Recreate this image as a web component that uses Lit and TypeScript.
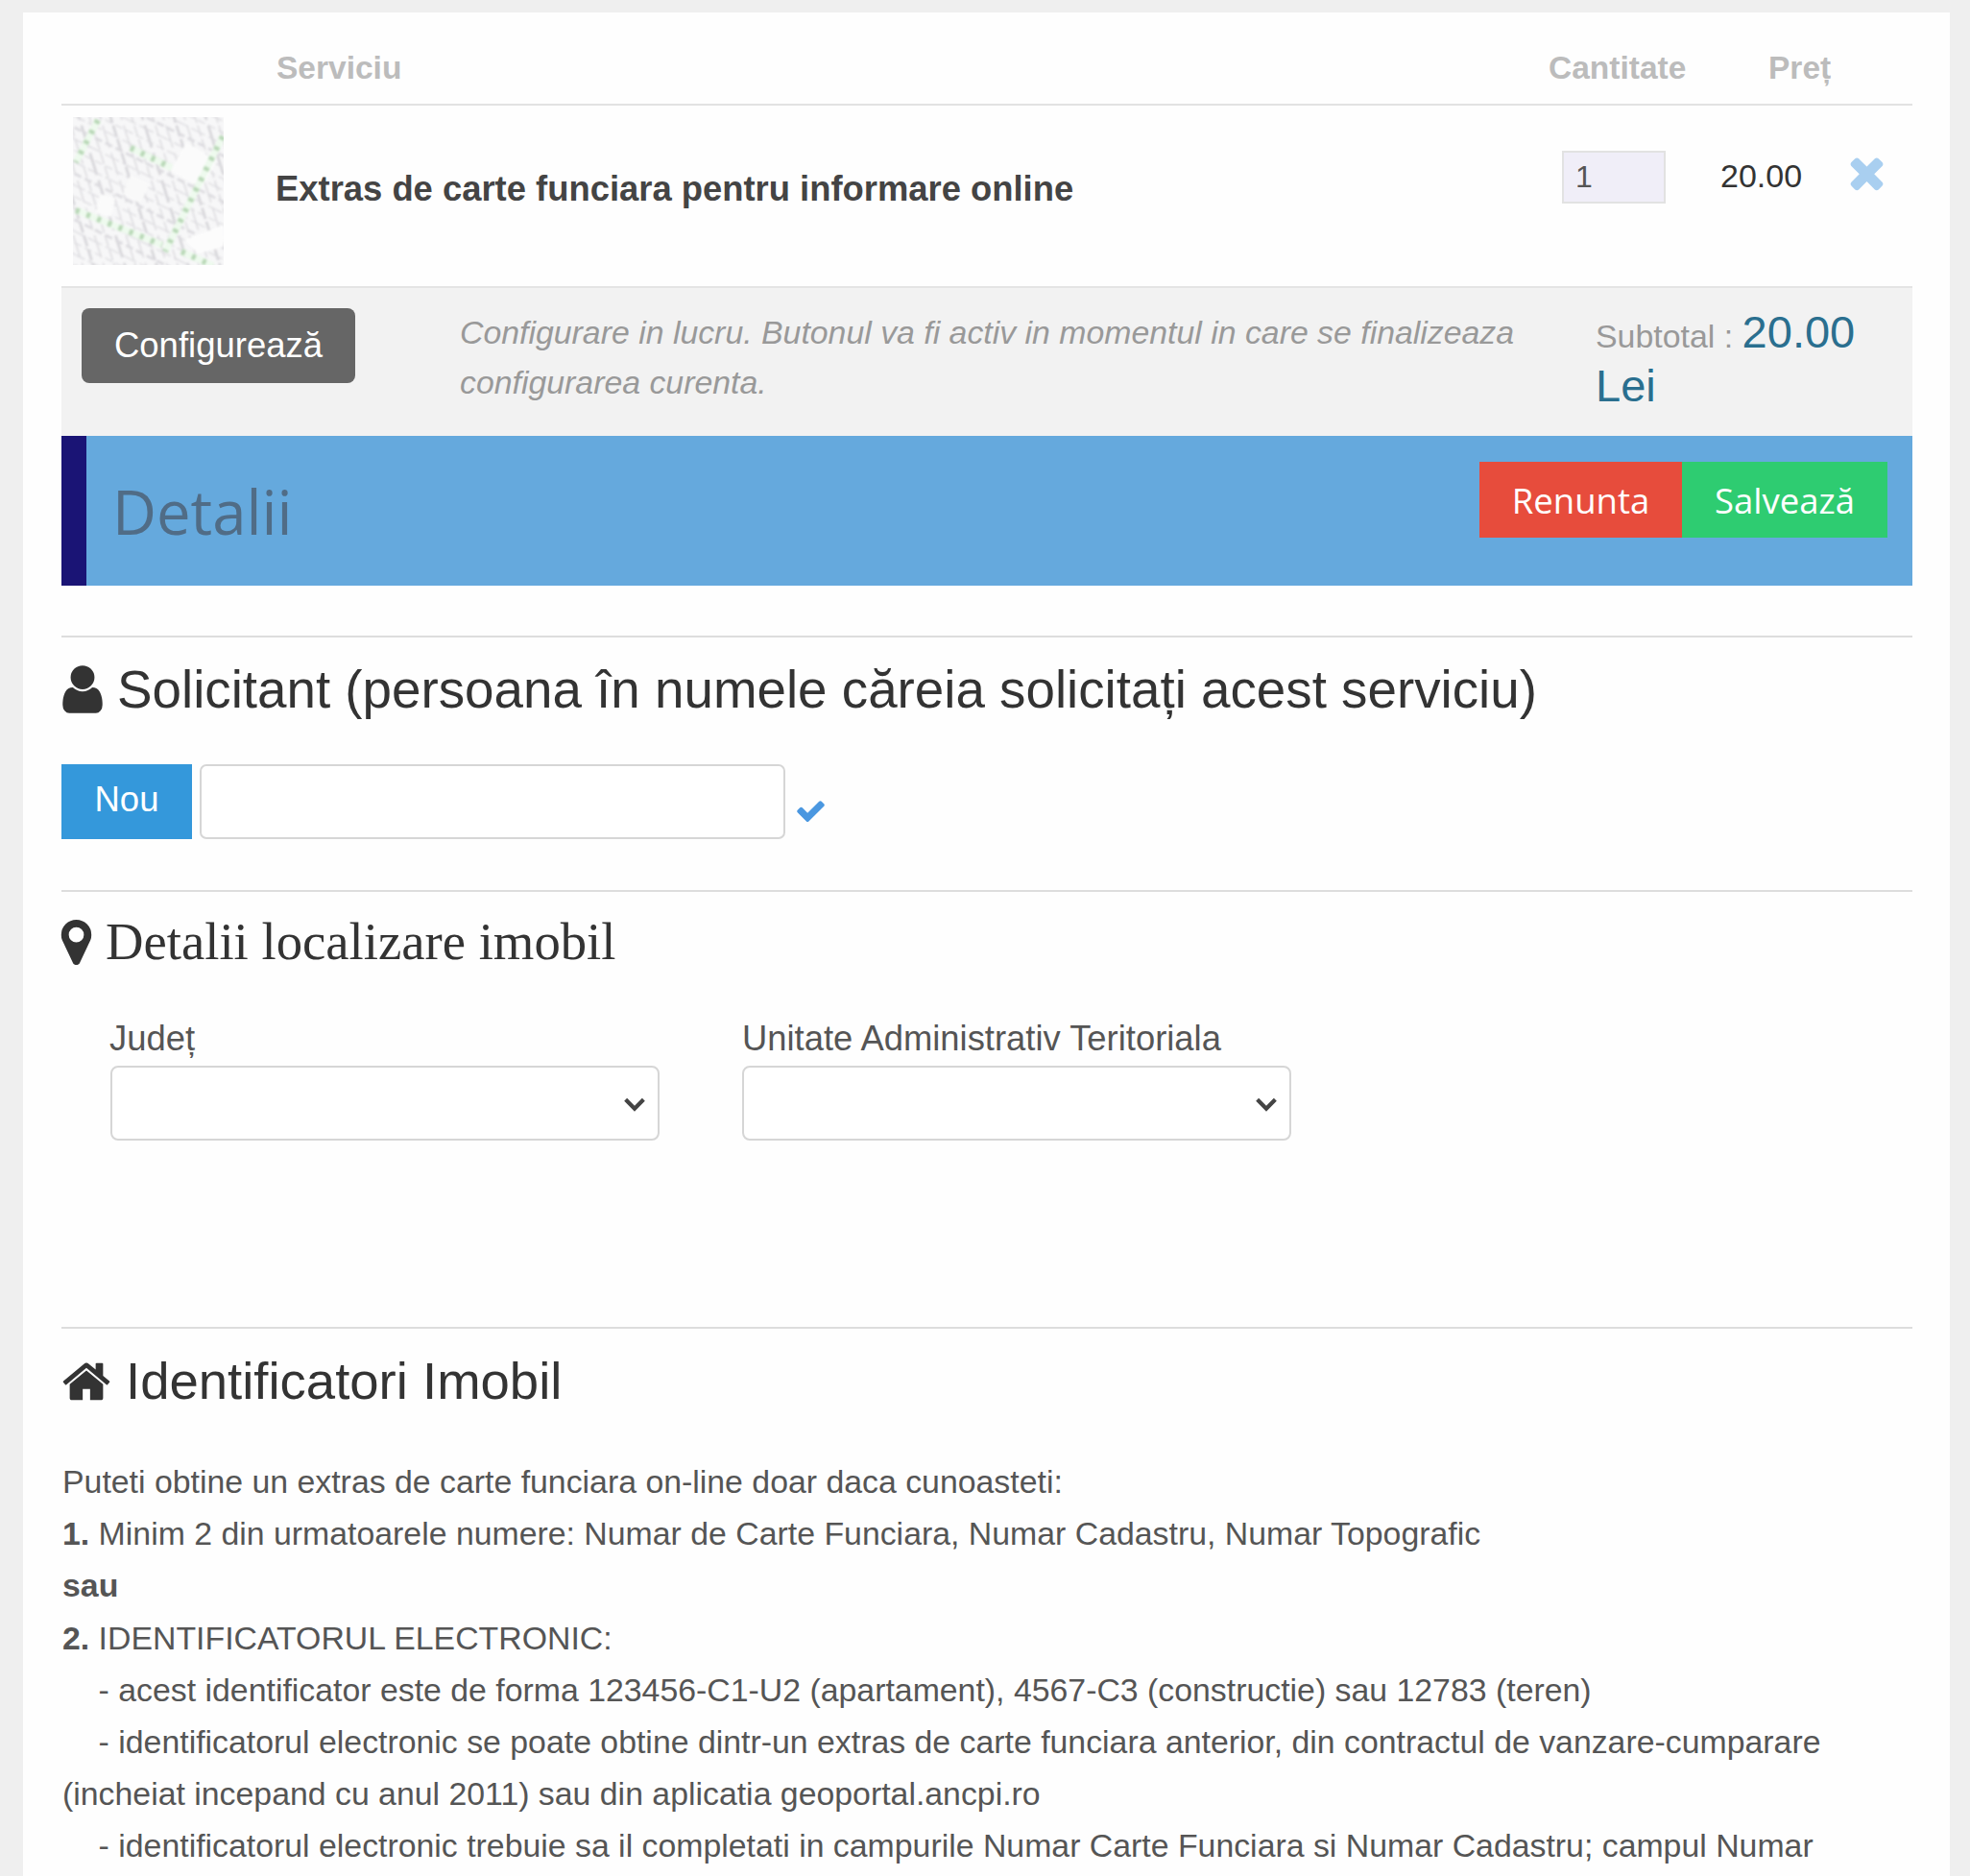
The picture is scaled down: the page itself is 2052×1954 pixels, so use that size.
import { LitElement, html, css, svg } from "lit";
import { customElement } from "lit/decorators.js";

const P = {
  user: "M1536 1399q0 109-62.5 187t-150.5 78h-854q-88 0-150.5-78t-62.5-187q0-85 8.5-160.5t31.5-151.5 58.5-130 94-88.5 134.5-34.5q131 128 313 128t313-128q76 0 134.5 34.5t94 88.5 58.5 130 31.5 151.5 8.5 160.5zm-256-887q0 159-112.5 271.5t-271.5 112.5-271.5-112.5-112.5-271.5 112.5-271.5 271.5-112.5 271.5 112.5 112.5 271.5z",
  pin: "M1152 640q0-106-75-181t-181-75-181 75-75 181 75 181 181 75 181-75 75-181zm256 0q0 109-33 179l-364 774q-16 33-47.5 52t-67.5 19-67.5-19-46.5-52l-365-774q-33-70-33-179 0-212 150-362t362-150 362 150 150 362z",
  home: "M1472 992v480q0 26-19 45t-45 19h-384v-384h-256v384h-384q-26 0-45-19t-19-45v-480q0-1 .5-3t.5-3l575-474 575 474q1 2 1 6zm223-69l-62 74q-8 9-21 11h-3q-13 0-21-7l-692-577-692 577q-12 8-24 7-13-2-21-11l-62-74q-8-10-7-23.5t11-21.5l719-599q32-26 76-26t76 26l244 204v-195q0-14 9-23t23-9h192q14 0 23 9t9 23v408l219 182q10 8 11 21.5t-7 23.5z",
  times: "M1490 1322q0 40-28 68l-136 136q-28 28-68 28t-68-28l-294-294-294 294q-28 28-68 28t-68-28l-136-136q-28-28-28-68t28-68l294-294-294-294q-28-28-28-68t28-68l136-136q28-28 68-28t68 28l294 294 294-294q28-28 68-28t68 28l136 136q28 28 28 68t-28 68l-294 294 294 294q28 28 28 68z",
  check: "M1671 566q0 40-28 68l-724 724-136 136q-28 28-68 28t-68-28l-136-136-362-362q-28-28-28-68t28-68l136-136q28-28 68-28t68 28l294 295 656-657q28-28 68-28t68 28l136 136q28 28 28 68z",
};

const icon = (d: string, cls: string, box = "0 0 1792 1792") =>
  html`<svg class=${cls} viewBox=${box} aria-hidden="true"><path d=${d} fill="currentColor"></path></svg>`;

function mapLines() {
  const grey: any[] = [];
  for (let i = -8; i < 24; i++) {
    const x = i * 11;
    grey.push(svg`<line x1=${x} y1="-20" x2=${x + 62} y2="180" stroke="#d6d5d9" stroke-width=${i % 3 ? 1.2 : 2.6} stroke-dasharray=${i % 2 ? "12 3" : "24 6"}></line>`);
  }
  for (let i = -8; i < 20; i++) {
    const y = i * 12;
    grey.push(svg`<line x1="-20" y1=${y} x2="180" y2=${y + 100} stroke="#dbdade" stroke-width=${i % 4 ? 1.2 : 2.6} stroke-dasharray=${i % 2 ? "16 4" : "8 4"}></line>`);
  }
  const roads = [
    [26, 3, 3, 47],
    [156, 20, 96, 140],
    [3, 97, 93, 133],
    [60, 32, 103, 53],
    [113, 140, 146, 155],
  ];
  const green = roads.map(
    ([a, b, c, d]) => svg`
      <line x1=${a} y1=${b} x2=${c} y2=${d} stroke="#eefaee" stroke-width="7"></line>
      <line x1=${a} y1=${b} x2=${c} y2=${d} stroke="#b9d8b7" stroke-width="6" stroke-dasharray="4 8"></line>`
  );
  return html`<svg class="map" viewBox="0 0 157 154" aria-hidden="true">
    <rect width="157" height="154" fill="#f7f7f8"></rect>
    <g class="map-blur">
      ${grey}
      <polygon points="118,26 150,46 134,74 102,56" fill="#fbfbfb"></polygon>
      <polygon points="28,80 44,84 40,104 24,100" fill="#fbfbfb"></polygon>
      <polygon points="116,128 157,112 157,135 130,142" fill="#fcfcfc"></polygon>
      <polygon points="60,60 80,70 70,90 52,80" fill="#f9f9f9"></polygon>
      ${green}
    </g>
  </svg>`;
}

@customElement("app-root")
export class AppRoot extends LitElement {
  static styles = css`
    :host {
      display: block;
      height: 1954px;
      overflow: hidden;
      background: #efefef;
      padding: 13px 21px 0 24px;
      box-sizing: border-box;
      font-family: "Liberation Sans", Arial, sans-serif;
      color: #555;
    }
    .card {
      background: #fefefe;
      height: 1941px;
      padding: 0 39px 0 40px;
      box-sizing: border-box;
      overflow: hidden;
    }
    .thead {
      display: grid;
      grid-template-columns: 224px 1fr 231px 150px;
      align-items: center;
      height: 97px;
      border-bottom: 2px solid #e2e2e2;
      box-sizing: border-box;
      font-weight: 700;
      font-size: 33.5px;
      color: #bcbcbc;
      padding-top: 21px;
    }
    .thead .name { grid-column: 2; }
    .thead .qty { grid-column: 3; padding-left: 2px; }
    .thead .price { grid-column: 4; }
    .item {
      display: grid;
      grid-template-columns: 224px 1fr 180px 134px 66px;
      align-items: start;
      height: 188px;
    }
    .thumb { padding: 12px 0 0 12px; }
    .map { display: block; width: 157px; height: 154px; }
    .map-blur { filter: blur(1.3px); }
    .title {
      font-weight: 700;
      font-size: 36.4px;
      line-height: 44px;
      color: #444;
      margin: 65px 0 0 -1px;
    }
    .qty-box {
      margin: 47px 0 0 15px;
      width: 108px;
      height: 55px;
      box-sizing: border-box;
      background: #f0eef8;
      border: 2px solid #e2e2e2;
      font-size: 32px;
      line-height: 50px;
      padding-left: 12px;
      color: #555;
    }
    .amount { font-size: 34px; line-height: 40px; color: #333; margin-top: 53px; }
    .remove { width: 51px; height: 51px; color: #a9cff0; margin: 44px 0 0 -7px; }
    .sub {
      height: 156px;
      box-sizing: border-box;
      background: #f2f2f2;
      border-top: 2px solid #e4e4e4;
      display: grid;
      grid-template-columns: 415px 1183px 1fr;
    }
    .cfg {
      margin: 21px 0 0 21px;
      width: 285px;
      height: 78px;
      background: #666;
      color: #fff;
      border-radius: 8px;
      font-size: 36.5px;
      display: flex;
      align-items: center;
      justify-content: center;
    }
    .note {
      font-style: italic;
      color: #999;
      font-size: 33.85px;
      line-height: 52px;
      padding-top: 20px;
    }
    .subtotal { font-size: 33.9px; color: #999; line-height: 56px; padding-top: 22px; }
    .subtotal b { font-weight: 400; font-size: 47px; line-height: 1; color: #2a6f8f; }
    .bar {
      height: 156px;
      background: #65a9dd;
      border-left: 26px solid #1a1475;
      display: flex;
      justify-content: space-between;
      align-items: flex-start;
      padding: 27px 26px 0 27px;
      box-sizing: border-box;
      font-family: "Open Sans", sans-serif;
    }
    .bar h1 {
      margin: 0;
      font-weight: 400;
      font-size: 63.4px;
      line-height: 104px;
      color: #506c86;
    }
    .acts { display: flex; }
    .btn {
      height: 79px;
      display: flex;
      align-items: center;
      justify-content: center;
      color: #fff;
      font-size: 36.5px;
    }
    .red { width: 211px; background: #e74c3c; }
    .green { width: 214px; background: #2ecc71; }
    section { border-top: 2px solid #ddd; }
    h2 {
      margin: 0;
      font-weight: 400;
      font-size: 54.75px;
      line-height: 60px;
      color: #333;
      display: flex;
      align-items: center;
    }
    .s1 { margin-top: 52px; padding-top: 24px; height: 265px; box-sizing: border-box; }
    .s2 { padding-top: 22px; height: 455px; box-sizing: border-box; }
    .s3 { padding-top: 25px; }
    .s2 h2 { font-family: "Liberation Serif", serif; font-size: 54.7px; }
    .s3 h2 { font-size: 54.5px; }
    .i-user { width: 58px; height: 58px; margin: 0 7px 0 -7px; }
    .i-pin { width: 55px; height: 55px; margin: 0 3px 0 -12px; }
    .i-home { width: 54px; height: 54px; margin: 0 14px 0 -1px; }
    .row { display: flex; align-items: flex-start; margin-top: 48px; }
    .nou {
      width: 136px;
      height: 78px;
      background: #3498db;
      color: #fff;
      font-size: 36.5px;
      display: flex;
      align-items: center;
      justify-content: center;
      padding-bottom: 4px;
      box-sizing: border-box;
    }
    .inp {
      width: 610px;
      height: 78px;
      margin-left: 8px;
      box-sizing: border-box;
      border: 2px solid #d6d6d6;
      border-radius: 7px;
      background: #fff;
      padding: 0;
    }
    .i-check { width: 33px; height: 33px; color: #4a97e0; margin: 32px 0 0 10px; }
    .fields {
      display: grid;
      grid-template-columns: 572px 572px;
      column-gap: 86px;
      margin: 51px 0 0 51px;
    }
    .fields label { display: block; font-size: 36.4px; line-height: 40px; color: #555; margin-left: -1px; }
    .fields div + div label { margin-left: 0; }
    .fields select {
      display: block;
      appearance: none;
      width: 100%;
      height: 78px;
      margin-top: 8px;
      box-sizing: border-box;
      border: 2px solid #d6d6d6;
      border-radius: 8px;
      background: #fff url("data:image/svg+xml,%3Csvg xmlns='http://www.w3.org/2000/svg' viewBox='0 0 24 24'%3E%3Cpath d='M4 8l8 8 8-8' fill='none' stroke='%23444' stroke-width='3.6'/%3E%3C/svg%3E") no-repeat right 10px top 24px / 28px 28px;
    }
    .txt {
      margin: 47px 0 0 1px;
      font-size: 33.85px;
      line-height: 54.2px;
      color: #555;
    }
    .txt b { color: #555; }
  `;

  render() {
    const nb = "\u00a0\u00a0\u00a0\u00a0";
    return html`<div class="card">
      <div class="thead">
        <span class="name">Serviciu</span>
        <span class="qty">Cantitate</span>
        <span class="price">Preț</span>
      </div>
      <div class="item">
        <div class="thumb">${mapLines()}</div>
        <div class="title">Extras de carte funciara pentru informare online</div>
        <div class="qty-box">1</div>
        <span class="amount">20.00</span>
        ${icon(P.times, "remove")}
      </div>
      <div class="sub">
        <div class="cfg">Configurează</div>
        <div class="note">Configurare in lucru. Butonul va fi activ in momentul in care se finalizeaza configurarea curenta.</div>
        <div class="subtotal">Subtotal : <b>20.00</b> <b>Lei</b></div>
      </div>
      <div class="bar">
        <h1>Detalii</h1>
        <div class="acts">
          <div class="btn red">Renunta</div>
          <div class="btn green">Salvează</div>
        </div>
      </div>
      <section class="s1">
        <h2>${icon(P.user, "i-user")}Solicitant (persoana în numele căreia solicitați acest serviciu)</h2>
        <div class="row">
          <div class="nou">Nou</div>
          <input class="inp" />
          ${icon(P.check, "i-check")}
        </div>
      </section>
      <section class="s2">
        <h2>${icon(P.pin, "i-pin")}Detalii localizare imobil</h2>
        <div class="fields">
          <div><label>Județ</label><select><option></option></select></div>
          <div><label>Unitate Administrativ Teritoriala</label><select><option></option></select></div>
        </div>
      </section>
      <section class="s3">
        <h2>${icon(P.home, "i-home")}Identificatori Imobil</h2>
        <div class="txt">
          Puteti obtine un extras de carte funciara on-line doar daca cunoasteti:<br />
          <b>1.</b> Minim 2 din urmatoarele numere: Numar de Carte Funciara, Numar Cadastru, Numar Topografic<br />
          <b>sau</b><br />
          <b>2.</b> IDENTIFICATORUL ELECTRONIC:<br />
          ${nb}- acest identificator este de forma 123456-C1-U2 (apartament), 4567-C3 (constructie) sau 12783 (teren)<br />
          ${nb}- identificatorul electronic se poate obtine dintr-un extras de carte funciara anterior, din contractul de vanzare-cumparare (incheiat incepand cu anul 2011) sau din aplicatia geoportal.ancpi.ro<br />
          ${nb}- identificatorul electronic trebuie sa il completati in campurile Numar Carte Funciara si Numar Cadastru; campul Numar
        </div>
      </section>
    </div>`;
  }
}
